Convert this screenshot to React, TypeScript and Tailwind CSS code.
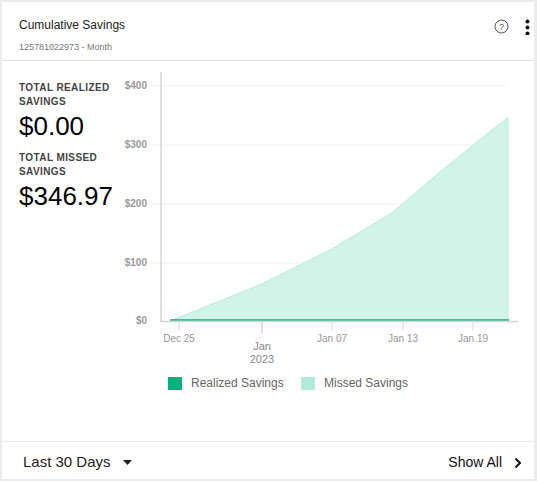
export default function App() {
  const f = { fontFamily: '"Liberation Sans", Arial, sans-serif' };
  const area = "M170,321 L262,284 L332,249 L392,213 L440,172 L492,130 L509,117 L509,321 Z";
  return (
    <div style={f} className="w-[537px] h-[481px] bg-[#ececec] p-[2px]">
      <div className="w-[532px] h-[477px] bg-white flex flex-col">
        <div className="h-[59px] border-b border-[#e2e2e2] flex justify-between pl-[17px] pr-[4px] pt-[14px]">
          <div>
            <div className="text-[12px] text-[#222]">Cumulative Savings</div>
            <div className="text-[9px] text-[#777] mt-[7px]">125781022973 - Month</div>
          </div>
          <div className="flex items-start gap-[16px] pt-[3px]">
            <svg width="15" height="15" viewBox="0 0 15 15">
              <circle cx="7.5" cy="7.5" r="6.5" fill="none" stroke="#555" strokeWidth="1" />
              <text x="7.5" y="11" textAnchor="middle" fontSize="9" fill="#555">?</text>
            </svg>
            <svg width="5" height="16" viewBox="0 0 5 16">
              <circle cx="2.5" cy="2.5" r="2" fill="#111" />
              <circle cx="2.5" cy="8.5" r="2" fill="#111" />
              <circle cx="2.5" cy="14.5" r="2" fill="#111" />
            </svg>
          </div>
        </div>
        <div className="flex h-[380px]">
          <div className="w-[112px] shrink-0 pl-[17px] pt-[20px]">
            <div className="text-[10px] font-bold text-[#444] tracking-[0.4px] leading-[14px] w-[100px]">TOTAL REALIZED SAVINGS</div>
            <div className="text-[26px] text-black leading-[30px] mt-[2px]">$0.00</div>
            <div className="text-[10px] font-bold text-[#444] tracking-[0.4px] leading-[14px] mt-[10px]">TOTAL MISSED SAVINGS</div>
            <div className="text-[26px] text-black leading-[30px] mt-[2px] whitespace-nowrap">$346.97</div>
          </div>
          <svg width="420" height="380" viewBox="0 0 420 380">
            <g transform="translate(-114,-61)" fontFamily='"Liberation Sans", Arial, sans-serif'>
              {[86, 145, 204, 263].map((y) => (
                <line key={y} x1="152" x2="506" y1={y} y2={y} stroke="#f0f0f0" />
              ))}
              {[["$400", 89], ["$300", 148], ["$200", 207], ["$100", 266], ["$0", 324]].map(([t, y]) => (
                <text key={t as string} x="147" y={y as number} textAnchor="end" fontSize="10" fill="#999" fontWeight="bold">{t}</text>
              ))}
              <path d={area} fill="#d2f3e8" />
              <path d="M170,321 L262,284 L332,249 L392,213 L440,172 L492,130 L509,117" fill="none" stroke="#b3ebda" strokeWidth="1" />
              <line x1="170" x2="509" y1="320" y2="320" stroke="#0cae7e" strokeWidth="1.5" />
              <line x1="161" x2="161" y1="72" y2="322" stroke="#d6d6d6" strokeWidth="1.5" />
              <line x1="161" x2="518" y1="321.5" y2="321.5" stroke="#d6d6d6" strokeWidth="1.5" />
              {[179, 332, 403, 473].map((x) => (
                <line key={x} x1={x} x2={x} y1="322" y2="330" stroke="#d6d6d6" />
              ))}
              <line x1="262" x2="262" y1="322" y2="334" stroke="#d6d6d6" strokeWidth="1.5" />
              {[["Dec 25", 179], ["Jan 07", 332], ["Jan 13", 403], ["Jan 19", 473]].map(([t, x]) => (
                <text key={t as string} x={x as number} y="342" textAnchor="middle" fontSize="10" fill="#999">{t}</text>
              ))}
              <text x="262" y="350" textAnchor="middle" fontSize="11" fill="#888">Jan</text>
              <text x="262" y="363" textAnchor="middle" fontSize="11" fill="#888">2023</text>
              <rect x="168" y="377" width="14" height="13" fill="#0aaf7e" />
              <text x="191" y="387" fontSize="12" fill="#666">Realized Savings</text>
              <rect x="301" y="377" width="14" height="13" fill="#b2ebda" />
              <text x="324" y="387" fontSize="12" fill="#666">Missed Savings</text>
            </g>
          </svg>
        </div>
        <div className="flex-1 border-t border-[#ebebeb] flex items-center justify-between pl-[21px] pr-[12px] pt-[4px]">
          <div className="flex items-center gap-[12px] text-[15px] text-[#222]">
            Last 30 Days
            <svg width="9" height="5" viewBox="0 0 9 5"><path d="M0,0 L9,0 L4.5,5 Z" fill="#222" /></svg>
          </div>
          <div className="flex items-center gap-[12px] text-[14px] text-[#111]">
            Show All
            <svg width="8" height="12" viewBox="0 0 8 12"><path d="M1.5,1.5 L6,6 L1.5,10.5" fill="none" stroke="#111" strokeWidth="2" /></svg>
          </div>
        </div>
      </div>
    </div>
  );
}
